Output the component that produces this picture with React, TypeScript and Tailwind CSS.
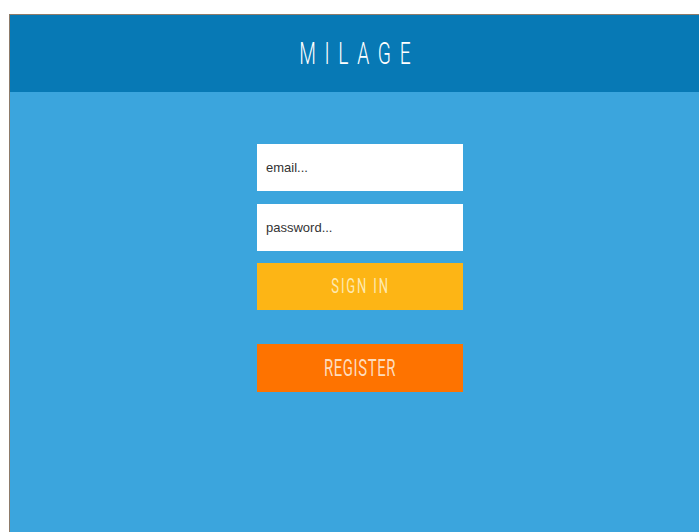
import React from "react";

const condensed = { fontFamily: "Roboto, 'DejaVu Sans', sans-serif" };
const body = { fontFamily: "'Liberation Sans', Arial, sans-serif" };

export default function App() {
  return (
    <div className="h-[532px] w-[699px] overflow-hidden bg-white pt-[14px] pl-[9px]">
      <div className="flex h-full flex-col border-l border-t border-[#8d7b6a]">
        <header className="flex h-[77px] shrink-0 items-center justify-center bg-[#0779b5]">
          <span
            className="inline-block origin-center scale-x-[0.62] pl-[14px] text-[31px] font-light leading-none tracking-[14px] text-white"
            style={condensed}
          >
            MILAGE
          </span>
        </header>
        <main className="flex-1 bg-[#3ba5dd] pl-[247px] pt-[52px]">
          <form className="flex w-[206px] flex-col" onSubmit={(e) => e.preventDefault()}>
            <input
              type="email"
              placeholder="email..."
              className="h-[47px] bg-white px-[9px] text-[13px] text-[#333] outline-none placeholder:text-[#333]"
              style={body}
            />
            <input
              type="password"
              placeholder="password..."
              className="mt-[13px] h-[47px] bg-white px-[9px] text-[13px] text-[#333] outline-none placeholder:text-[#333]"
              style={body}
            />
            <button
              type="submit"
              className="mt-[12px] flex h-[47px] items-center justify-center bg-[#fdb515]"
            >
              <span
                className="inline-block scale-x-[0.62] pl-[3px] text-[21px] font-normal leading-none tracking-[3px] text-[#fde9b0]"
                style={condensed}
              >
                SIGN IN
              </span>
            </button>
            <button
              type="button"
              className="mt-[34px] flex h-[48px] items-center justify-center bg-[#fe7300]"
            >
              <span
                className="inline-block scale-x-[0.62] pl-[1px] text-[24px] font-normal leading-none tracking-[1px] text-[#fddcbd]"
                style={condensed}
              >
                REGISTER
              </span>
            </button>
          </form>
        </main>
      </div>
    </div>
  );
}
